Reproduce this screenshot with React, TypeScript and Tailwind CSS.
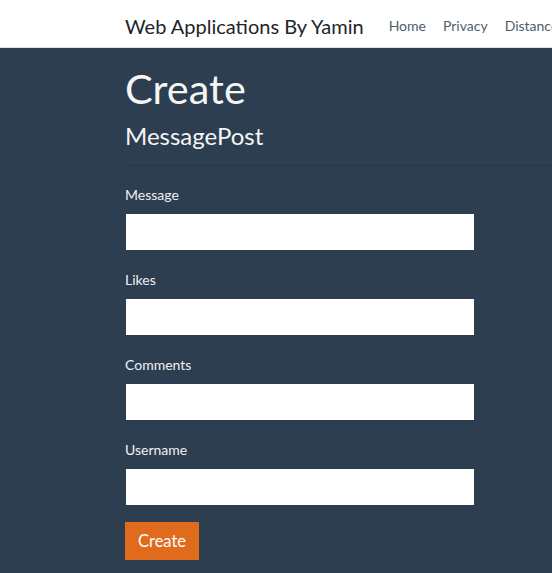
import React from 'react';

const FIELDS = ['Message', 'Likes', 'Comments', 'Username'];

const App: React.FC = () => {
  return (
    <div className="min-h-[573px] bg-[#2c3e50] font-['Lato','Liberation_Sans',sans-serif] overflow-hidden">
      <nav className="h-[48px] bg-white border-b border-[#dee2e6] flex items-center pl-[125px] pt-[4px] whitespace-nowrap">
        <span className="text-[20px] text-[#212529] mr-[25px]">Web Applications By Yamin</span>
        <div className="flex gap-[17px] text-[14px] text-[#4f5e6e]">
          <span>Home</span>
          <span>Privacy</span>
          <span>Distance</span>
        </div>
      </nav>

      <main className="pl-[125px] pt-[16px]">
        <h1 className="text-[41.5px] leading-[48px] text-[#f5f5f5]">Create</h1>
        <h4 className="text-[24px] leading-[28px] mt-[10px] text-[#f5f5f5]">MessagePost</h4>
        <hr className="mt-[15px] border-t border-[#27374a]" />

        <form className="pt-[19px] w-[349px]">
          {FIELDS.map((f) => (
            <div key={f} className="mb-[20px]">
              <label className="block text-[14px] leading-[20px] text-[#f0f0f0] mb-[9px]">{f}</label>
              <input className="block ml-px w-[348px] h-[36px] bg-white outline-none" />
            </div>
          ))}
          <button
            type="button"
            className="-mt-[3px] h-[38px] px-[13px] bg-[#e06b1c] text-white text-[16.5px]"
          >
            Create
          </button>
        </form>
      </main>
    </div>
  );
};

export default App;
